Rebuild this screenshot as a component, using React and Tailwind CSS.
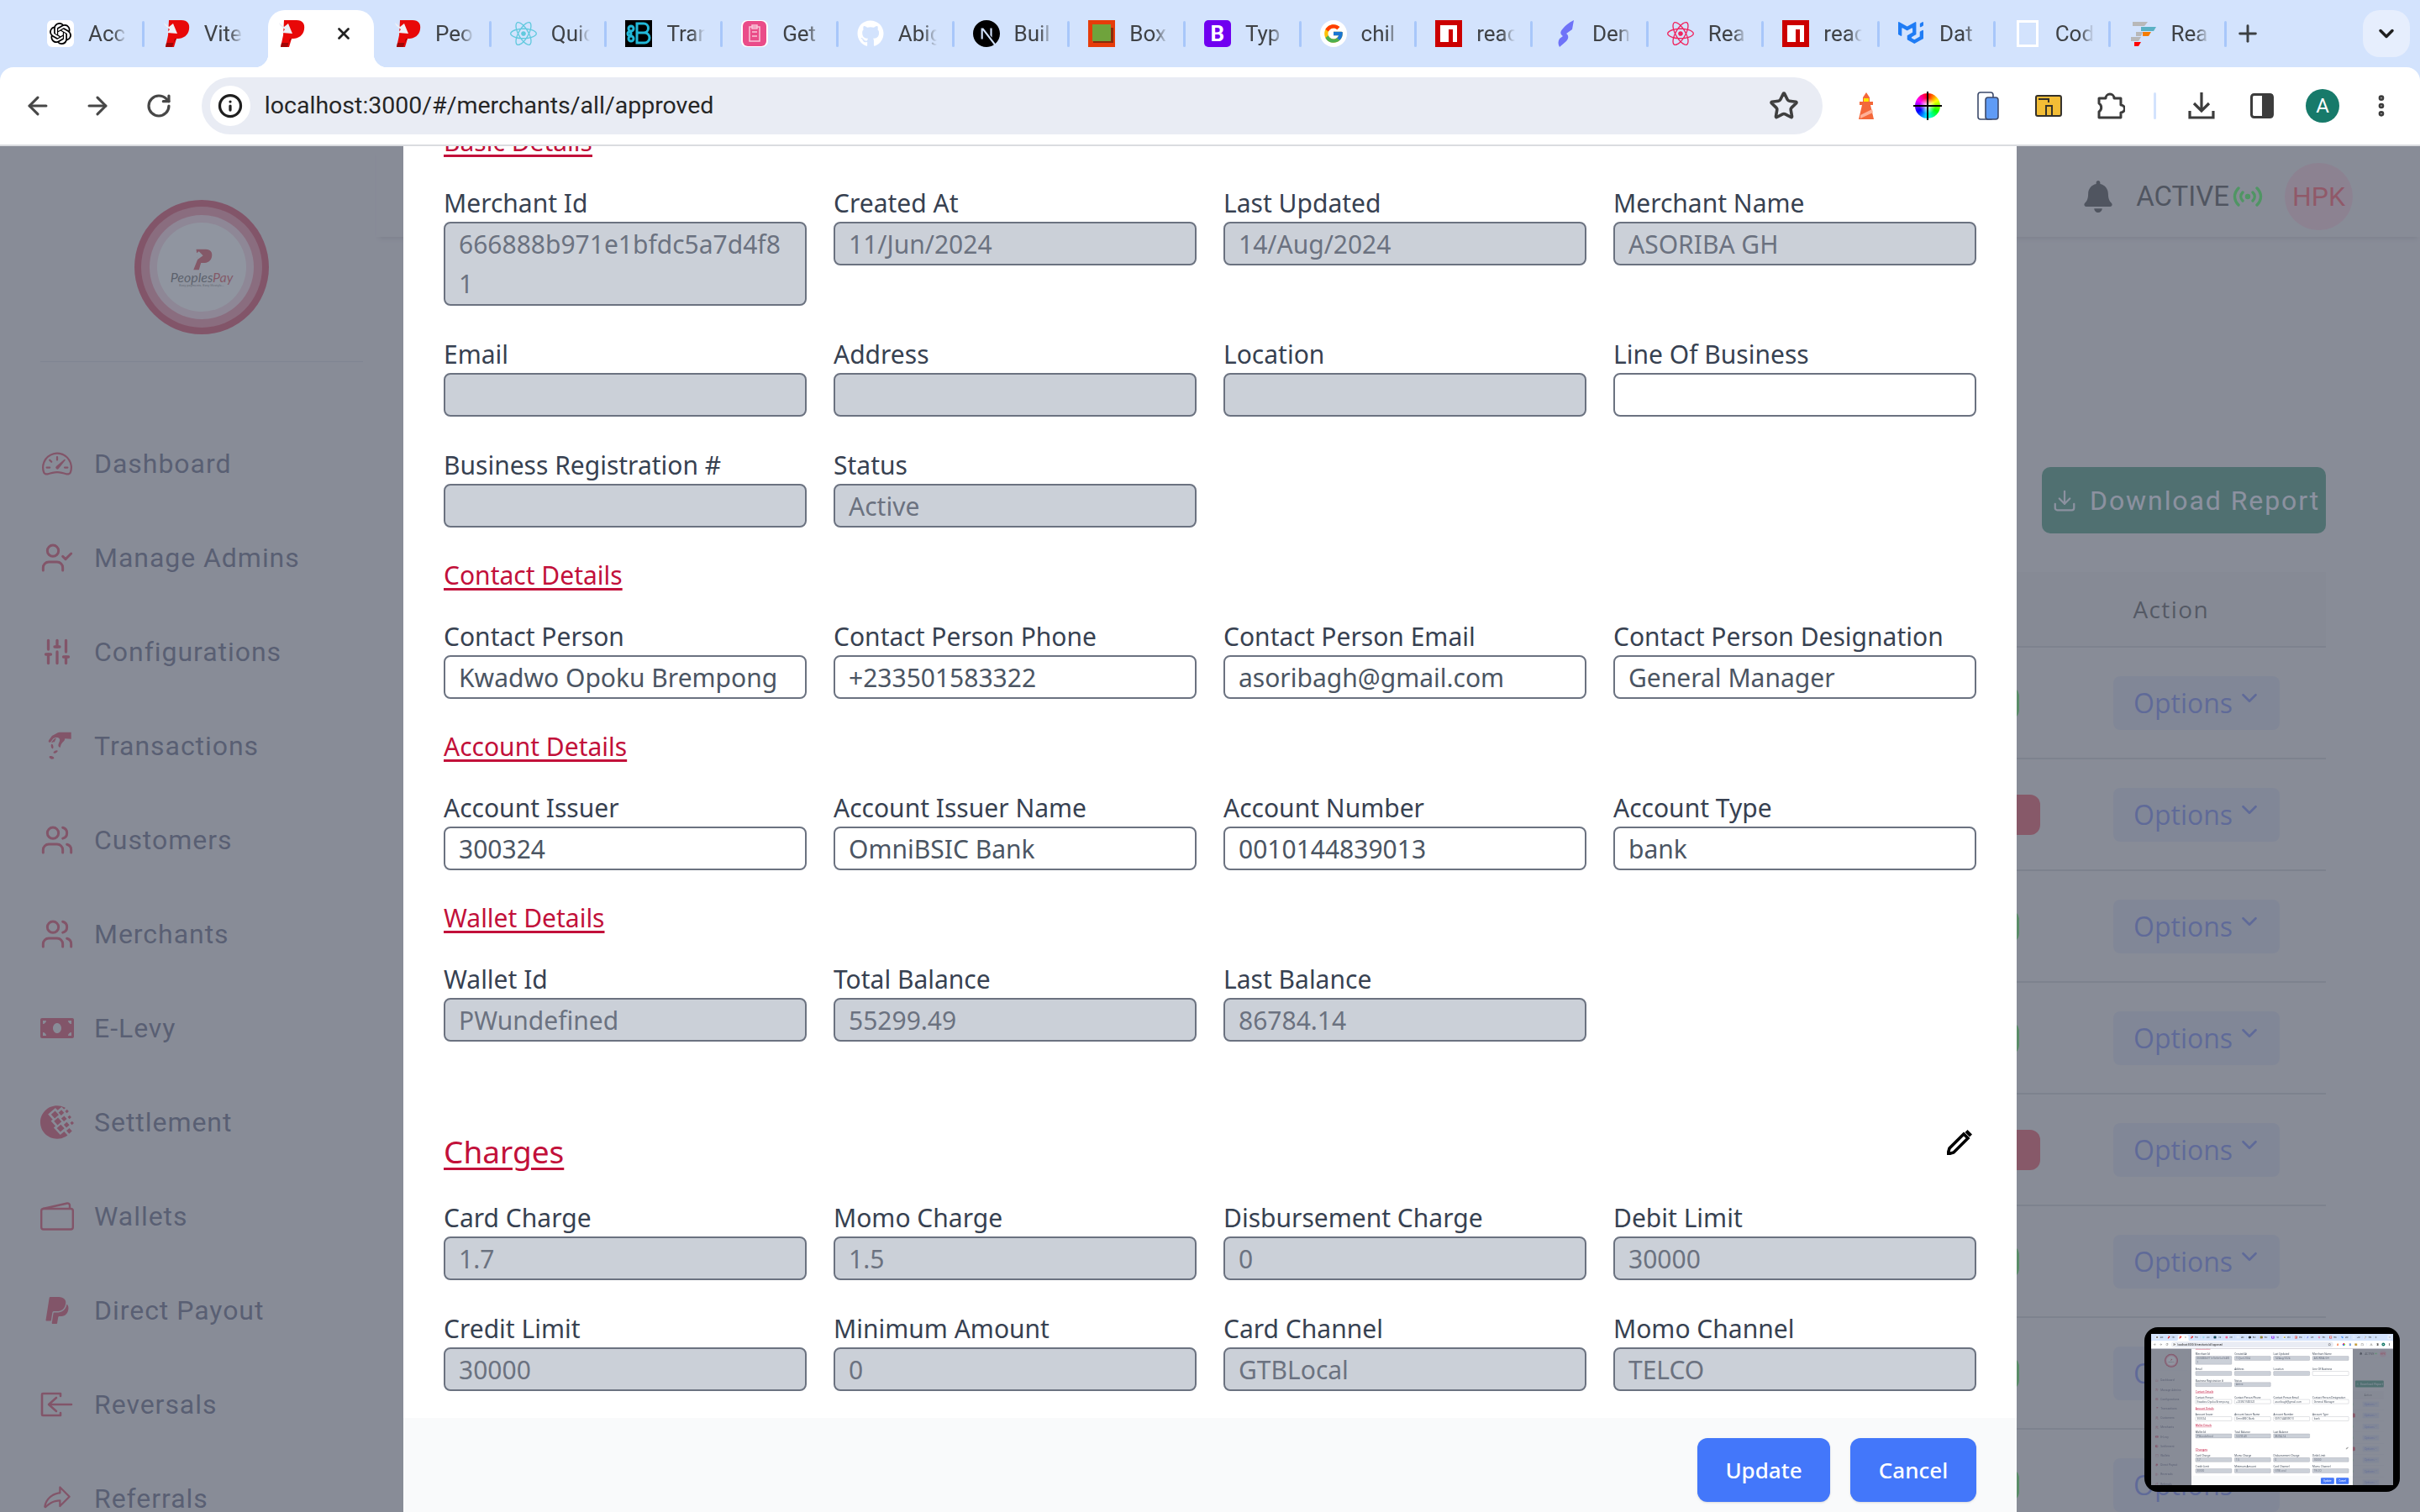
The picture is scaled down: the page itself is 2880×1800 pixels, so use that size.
import React from "react";
import { ArrowLeft, ArrowRight, RotateCw, Star, MoreVertical, X, Plus, ChevronDown, UserCheck, SlidersVertical, Users, Download, Info } from "lucide-react";
import { FaReact, FaGithub, FaPaypal, FaMoneyBill, FaBell } from "react-icons/fa";
import { FcGoogle } from "react-icons/fc";
import { SiOpenai, SiMui, SiWebmoney, SiNextdotjs } from "react-icons/si";
import { GiPayMoney } from "react-icons/gi";
import { PiShareFat } from "react-icons/pi";
import { BsSpeedometer2 } from "react-icons/bs";

const PLogo = () => (
  <svg viewBox="0 0 32 32" className="w-[32px] h-[32px]">
    <path d="M7 0h15c7 0 10 4 9 11-1 7-7 11-13 11h-2l-3 10H3l3-14z" fill="#e80808" />
    <path d="M16 22h-2l-3 10H3l1-5h8z" fill="#a00606" />
    <path d="M1 3l6 5 5-4 5 12-12-1 3-4-6-5z" fill="#eef0f6" />
  </svg>
);
const Npm = () => (
  <svg viewBox="0 0 32 32" className="w-[32px] h-[32px]">
    <rect width="32" height="32" fill="#c00" />
    <path d="M6 6h20v20h-5V11h-5v15H6z" fill="#fff" />
  </svg>
);
const Chain = () => (
  <svg viewBox="0 0 32 32" className="w-[32px] h-[32px]">
    <rect width="32" height="32" fill="#000" />
    <g fill="none" stroke="#22b8d8" strokeWidth="3">
      <path d="M14 4h8a4 4 0 0 1 0 11h-8zM14 15h9a5 5 0 0 1 0 12h-9z" />
      <circle cx="7" cy="10" r="3" /><circle cx="7" cy="22" r="3" />
      <circle cx="5" cy="16" r="2" />
    </g>
  </svg>
);
const Pink = () => (
  <svg viewBox="0 0 32 32" className="w-[32px] h-[32px]">
    <rect width="32" height="32" rx="7" fill="#fff" />
    <rect x="2" y="1" width="28" height="30" rx="6" fill="#ea4c89" />
    <path d="M10 8h12v17H10zM13 6h6v4h-6zM13 14h6M13 19h6" fill="none" stroke="#f9c5d8" strokeWidth="1.5" />
  </svg>
);
const BoxIcon = () => (
  <svg viewBox="0 0 32 32" className="w-[32px] h-[32px]">
    <rect width="32" height="32" fill="#e63c0a" />
    <rect x="6" y="9" width="24" height="18" fill="#8a2b0a" />
    <rect x="5" y="5" width="22" height="20" fill="#6fa33c" />
  </svg>
);
const Den = () => (
  <svg viewBox="0 0 32 32" className="w-[32px] h-[32px]">
    <path d="M14 10c3-4 7-7 13-10l-2 11-7 5c3 2 3 6 0 9-2 2-5 4-8 7-2-3-2-7 0-10l4-3c-4-3-3-6 0-9z" fill="#6f73f8" />
  </svg>
);
const Bars = () => (
  <svg viewBox="0 0 32 32" className="w-[32px] h-[32px]">
    <path d="M4 2h18l-4 5H4z" fill="#b8b8b8" />
    <path d="M14 8h18l-3 5H14z" fill="#5ab1c4" />
    <path d="M8 14h8l-2 5H8z" fill="#b8b8b8" />
    <path d="M16 14h10l-3 5H16z" fill="#f57c00" />
    <path d="M2 20h12l-3 5H2z" fill="#b8b8b8" />
    <path d="M6 26h8l-3 5H6z" fill="#f00" />
  </svg>
);
const Reversal = () => (
  <svg viewBox="0 0 40 32" fill="none" stroke="currentColor" strokeWidth="2.6" strokeLinecap="round" strokeLinejoin="round" className="w-[40px] h-[32px]">
    <path d="M24 6V3H3a1 1 0 0 0-1 1v24a1 1 0 0 0 1 1h21v-3" />
    <path d="M37 16H11M19 8l-9 8 9 8" />
  </svg>
);
const WalletIcon = () => (
  <svg viewBox="0 0 40 34" fill="none" stroke="currentColor" strokeWidth="2.4" strokeLinejoin="round" className="w-[40px] h-[34px]">
    <rect x="1.2" y="8" width="37.6" height="24.5" rx="2.5" />
    <path d="M3 8L32 1.5c1.5-.3 3 .8 3 2.5v4" />
  </svg>
);

const tabs = [
  ["Acc", <div className="w-[32px] h-[32px] rounded-[6px] bg-white flex items-center justify-center"><SiOpenai className="w-[26px] h-[26px] text-black" /></div>],
  ["Vite", <PLogo />],
  ["", <PLogo />],
  ["Peo", <PLogo />],
  ["Quic", <FaReact className="w-[32px] h-[32px] text-[#61c9de]" />],
  ["Tran", <Chain />],
  ["Get", <Pink />],
  ["Abig", <FaGithub className="w-[32px] h-[32px] text-white" />],
  ["Buil", <SiNextdotjs className="w-[32px] h-[32px] text-black" />],
  ["Box", <BoxIcon />],
  ["Typ", <div className="w-[32px] h-[32px] rounded-[5px] bg-[#7000f0] flex items-center justify-center text-white text-[26px] leading-none font-['Roboto',sans-serif] font-bold">B</div>],
  ["chil", <div className="w-[32px] h-[32px] rounded-full bg-white flex items-center justify-center"><FcGoogle className="w-[26px] h-[26px]" /></div>],
  ["reac", <Npm />],
  ["Den", <Den />],
  ["Rea", <FaReact className="w-[32px] h-[32px] text-[#f0245e]" />],
  ["reac", <Npm />],
  ["Dat", <SiMui className="w-[30px] h-[30px] text-[#1f7cf5]" />],
  ["Cod", <div className="w-[26px] h-[32px] ml-[3px] border-[3px] border-white" />],
  ["Rea", <Bars />],
];

function TabStrip() {
  return (
    <div className="h-[80px] bg-[#d3e3fd] flex pl-[34px] relative">
      {tabs.map(([label, icon], i) => {
        const active = i === 2;
        return (
          <div key={i} className="relative w-[137.7px] shrink-0 flex items-start pt-[24px] pl-[22px]">
            {active && (
              <>
                <div className="absolute left-[10px] right-[2px] top-[12px] bottom-0 bg-white rounded-t-[20px]" />
                <div className="absolute left-[-6px] bottom-0 w-[16px] h-[16px] bg-[radial-gradient(circle_at_0_0,transparent_16px,white_16.5px)]" />
                <div className="absolute right-[-14px] bottom-0 w-[16px] h-[16px] bg-[radial-gradient(circle_at_100%_0,transparent_16px,white_16.5px)]" />
              </>
            )}
            <div className="relative w-[32px] h-[32px] shrink-0">{icon}</div>
            {active ? (
              <X className="relative ml-[35px] mt-[5px] w-[22px] h-[22px] text-[#222]" strokeWidth={3} />
            ) : (
              <div className="relative ml-[17px] w-[46px] overflow-hidden whitespace-nowrap text-[26px] leading-[32px] text-[#3f4246] font-['Roboto',sans-serif] [mask-image:linear-gradient(to_right,black_65%,transparent)]">{label}</div>
            )}
            {i !== 1 && i !== 2 && (
              <div className="absolute right-0 top-[25px] w-[3px] h-[31px] rounded-full bg-[#a8c7fa]" />
            )}
          </div>
        );
      })}
      <Plus className="ml-[9px] mt-[24px] w-[32px] h-[32px] text-[#3c4043]" strokeWidth={2.2} />
      <div className="absolute left-[2812px] top-[12px] w-[56px] h-[56px] rounded-[20px] bg-[#e6eefd] flex items-center justify-center">
        <ChevronDown className="w-[28px] h-[28px] text-[#1f1f1f]" strokeWidth={3} />
      </div>
    </div>
  );
}

function ToolBar() {
  return (
    <div className="h-[92px] bg-white rounded-t-[16px] flex items-center border-b-0 pl-[28px] pr-[30px]">
      <ArrowLeft className="w-[34px] h-[34px] text-[#474747]" strokeWidth={2.2} />
      <ArrowRight className="ml-[37px] w-[34px] h-[34px] text-[#474747]" strokeWidth={2.2} />
      <RotateCw className="ml-[40px] w-[32px] h-[32px] text-[#474747]" strokeWidth={2.4} />
      <div className="ml-[35px] w-[1932px] h-[68px] rounded-full bg-[#e9ecf4] flex items-center pl-[10px]">
        <div className="w-[48px] h-[48px] rounded-full bg-white flex items-center justify-center">
          <Info className="w-[30px] h-[30px] text-[#1f1f1f]" strokeWidth={2.6} />
        </div>
        <div className="ml-[17px] text-[28.5px] leading-[40px] text-[#262626] font-['Roboto',sans-serif]">localhost:3000/#/merchants/all/approved</div>
        <Star className="ml-auto mr-[28px] w-[36px] h-[36px] text-[#3f3f3f]" strokeWidth={2.4} />
      </div>
      <div className="ml-[40px] w-[24px] h-[32px] flex">
        <svg viewBox="0 0 24 32" className="w-[24px] h-[32px]">
          <path d="M12 0l4 6v5h4v4h-3l4 17H3l4-17H4v-4h4V6z" fill="#f4683a" />
          <rect x="9" y="7" width="6" height="4" fill="#ffe600" />
          <path d="M5 27l14-7 1 4-15 7z" fill="#ffb097" />
        </svg>
      </div>
      <div className="ml-[46px] w-[30px] h-[30px] rounded-full bg-[radial-gradient(circle,#ffffff_0%,transparent_45%),conic-gradient(#ff0000,#ffff00,#00ff00,#00ffff,#0000ff,#ff00ff,#ff0000)] relative">
        <div className="absolute left-[14px] top-[-2px] w-[2px] h-[34px] bg-black" />
        <div className="absolute top-[14px] left-[-2px] h-[2px] w-[34px] bg-black" />
      </div>
      <svg viewBox="0 0 26 34" className="ml-[44px] w-[26px] h-[34px]">
        <rect x="1" y="1" width="18" height="32" rx="3" fill="#fff" stroke="#3c4a6b" strokeWidth="1.6" />
        <rect x="10" y="7" width="15" height="26" rx="3" fill="#5f9bf5" stroke="#3c4a6b" strokeWidth="1.6" />
      </svg>
      <svg viewBox="0 0 32 26" className="ml-[43px] w-[32px] h-[26px]">
        <rect x="1" y="1" width="30" height="24" rx="2" fill="#f3bd36" stroke="#33302a" strokeWidth="2" />
        <path d="M4 5h12v4M13 25V13h7v12" fill="none" stroke="#33302a" strokeWidth="2" />
      </svg>
      <svg viewBox="0 0 34 34" className="ml-[41px] w-[34px] h-[34px]" fill="none" stroke="#3c3c3c" strokeWidth="3" strokeLinejoin="round">
        <path d="M3 8h8a5 5 0 0 1 10 0h8v8a4 4 0 0 1 0 9v6H3v-7a6 6 0 0 0 0-10z" />
      </svg>
      <div className="ml-[34px] w-[3px] h-[32px] rounded-full bg-[#d3e3fd]" />
      <svg viewBox="0 0 32 32" className="ml-[38px] w-[32px] h-[32px]" fill="none" stroke="#3c3c3c" strokeWidth="3.2">
        <path d="M16 0v21M7 13l9 9 9-9M2 22v8h28v-8" />
      </svg>
      <svg viewBox="0 0 28 30" className="ml-[42px] w-[28px] h-[30px]">
        <rect x="1.5" y="1.5" width="25" height="27" rx="3" fill="#fff" stroke="#3c3c3c" strokeWidth="3" />
        <rect x="14" y="1.5" width="13" height="27" fill="#3c3c3c" />
      </svg>
      <div className="ml-[38px] w-[40px] h-[40px] rounded-full bg-[#177a6a] text-white text-[24px] flex items-center justify-center font-['Roboto',sans-serif]">A</div>
      <MoreVertical className="ml-[34px] w-[32px] h-[32px] text-[#3c3c3c]" strokeWidth={3} />
    </div>
  );
}

const Nav = [
  ["Dashboard", <BsSpeedometer2 className="w-[36px] h-[36px]" />],
  ["Manage Admins", <UserCheck className="w-[40px] h-[40px]" strokeWidth={1.8} />],
  ["Configurations", <SlidersVertical className="w-[36px] h-[36px]" strokeWidth={2.2} />],
  ["Transactions", <GiPayMoney className="w-[36px] h-[36px]" />],
  ["Customers", <Users className="w-[40px] h-[40px]" strokeWidth={1.8} />],
  ["Merchants", <Users className="w-[40px] h-[40px]" strokeWidth={1.8} />],
  ["E-Levy", <FaMoneyBill className="w-[40px] h-[40px]" />],
  ["Settlement", <SiWebmoney className="w-[40px] h-[40px]" />],
  ["Wallets", <WalletIcon />],
  ["Direct Payout", <FaPaypal className="w-[36px] h-[36px]" />],
  ["Reversals", <Reversal />],
  ["Referrals", <PiShareFat className="w-[36px] h-[36px]" />],
];

function Sidebar() {
  return (
    <div className="w-[448px] shrink-0 flex flex-col items-stretch">
      <div className="mt-[64px] ml-[160px] w-[160px] h-[160px] shrink-0 rounded-full bg-[#c80024] p-[8px]">
        <div className="w-full h-full rounded-full bg-[#e8607c] p-[10px]">
          <div className="w-full h-full rounded-full bg-[#f6c8d6] p-[9px]">
            <div className="w-full h-full rounded-full bg-white flex flex-col items-center justify-center pt-[2px]">
              <svg viewBox="0 0 32 32" className="w-[26px] h-[26px]">
                <path d="M8 1h14c7 0 10 5 9 10-1 7-6 10-13 10h-3l-3 10H4l6-15z" fill="#d01020" />
                <path d="M1 5l7 2 4-3 6 6-8 6-1-4-5 1z" fill="#fff" />
              </svg>
              <div className="text-[16px] leading-[15px] italic text-[#333] font-['Lato',sans-serif]">Peoples<span className="text-[#d01020]">Pay</span></div>
              <div className="text-[4px] leading-[6px] text-[#444] font-['Lato',sans-serif]">Easy payments, Easy lifestyle...</div>
            </div>
          </div>
        </div>
      </div>
      <div className="mt-[32px] ml-[48px] w-[384px] h-[1px] shrink-0 bg-[#bfbfc6]" />
      <div className="mt-[65px] flex flex-col shrink-0">
        {Nav.map(([label, icon]) => (
          <div key={label} className="h-[112px] shrink-0 pl-[48px] flex items-center">
            <div className="w-[40px] h-[44px] flex items-center justify-center text-[#c80024]">{icon}</div>
            <div className="ml-[24px] text-[32px] leading-[44px] tracking-[0.03em] text-[#272a4c] font-['Roboto',sans-serif] whitespace-nowrap">{label}</div>
          </div>
        ))}
      </div>
    </div>
  );
}

const statuses = ["g", "r", "g", "g", "r", "g", "g", "g"];

function Main() {
  return (
    <div className="flex-1 flex flex-col min-w-0">
      <div className="h-[108px] shrink-0 pt-[12px] shadow-[0_5px_6px_-3px_rgba(0,0,0,0.2)] flex items-center justify-end pr-[80px]">
        <FaBell className="w-[34px] h-[38px] text-black" />
        <div className="ml-[28px] text-[33px] text-black font-['Roboto',sans-serif]">ACTIVE</div>
        <svg viewBox="0 0 36 24" className="ml-[4px] w-[36px] h-[24px]" fill="none" stroke="#00ff10" strokeWidth="3.4" strokeLinecap="round">
          <path d="M7 2c-6 6-6 14 0 20M12 7c-3 3-3 7 0 10M29 2c6 6 6 14 0 20M24 7c3 3 3 7 0 10" />
          <circle cx="18" cy="12" r="1.5" fill="#00ff10" />
        </svg>
        <div className="ml-[26px] w-[81px] h-[80px] rounded-full bg-[#efb2c4] flex items-center justify-center text-[32px] text-[#ff1224] font-['Roboto',sans-serif]">HPK</div>
      </div>
      <div className="mt-[274px] shrink-0 self-end mr-[112px] w-[338px] h-[79px] rounded-[10px] bg-[#006e44] flex items-center pl-[12px] text-[#f0f0ff]">
        <Download className="w-[30px] h-[30px]" strokeWidth={1.8} />
        <span className="ml-[15px] text-[32px] tracking-[0.06em] whitespace-nowrap font-['Roboto',sans-serif]">Download Report</span>
      </div>
      <div className="mt-[46px] ml-[40px] mr-[112px] shrink-0">
        <div className="h-[90px] bg-[#d7d2d4] border-b-[2px] border-[#b3b2b8] flex items-center justify-end pr-[139px]">
          <span className="text-[28px] tracking-[0.05em] text-[#111] font-medium font-['Open_Sans',sans-serif]">Action</span>
        </div>
        {statuses.map((s, i) => (
          <div key={i} className="h-[133px] border-b-[2px] border-[#b3b2b8] flex items-center justify-end pr-[55px]">
            <div className={s === "g" ? "mr-[112px] w-[100px] h-[40px] rounded-[12px] bg-[#28da24]" : "mr-[87px] w-[120px] h-[48px] rounded-[12px] bg-[#db1224]"} />
            <div className="w-[198px] h-[64px] rounded-[8px] bg-[#c4c8da] flex items-center pl-[24px] text-[#3f55e0]">
              <span className="text-[32px] font-['Open_Sans',sans-serif]">Options</span>
              <ChevronDown className="ml-[5px] -mt-[12px] w-[30px] h-[30px]" strokeWidth={2.2} />
            </div>
          </div>
        ))}
      </div>
    </div>
  );
}

function Field({ label, value = "", edit = false, wrapped = false }) {
  return (
    <div className="flex flex-col min-w-0">
      <div className="pt-[3px] text-[30px] leading-[45px] text-[#374151] whitespace-nowrap">{label}</div>
      <div className={"min-h-[52px] border-[2px] border-[#6b7280] rounded-[8px] px-[16px] pt-[1px] text-[30px] leading-[47px] break-all " + (wrapped ? "pb-[1px] " : "") + (edit ? "bg-white text-[#4b5563]" : "bg-[#cbd0d8] text-[#6b7280]")}>{value}</div>
    </div>
  );
}

function Section({ title, children }) {
  return (
    <div className="flex flex-col">
      <div className="pt-[2px] text-[30px] leading-[46px] text-[#c2103a] underline underline-offset-[4px] mb-[24px]">{title}</div>
      <div className="grid grid-cols-4 gap-x-[32px] gap-y-[32px]">{children}</div>
    </div>
  );
}

function Modal() {
  return (
    <div className="absolute left-[480px] top-0 bottom-0 w-[1920px] bg-white flex flex-col font-['Noto_Sans',sans-serif]">
      <div className="flex-1 min-h-0 overflow-hidden">
        <div className="-mt-[30px] px-[48px] flex flex-col gap-[32px]">
          <Section title="Basic Details">
            <Field label="Merchant Id" value="666888b971e1bfdc5a7d4f81" wrapped />
            <Field label="Created At" value="11/Jun/2024" />
            <Field label="Last Updated" value="14/Aug/2024" />
            <Field label="Merchant Name" value="ASORIBA GH" />
            <Field label="Email" />
            <Field label="Address" />
            <Field label="Location" />
            <Field label="Line Of Business" edit />
            <Field label="Business Registration #" />
            <Field label="Status" value="Active" />
          </Section>
          <Section title="Contact Details">
            <Field label="Contact Person" value="Kwadwo Opoku Brempong" edit />
            <Field label="Contact Person Phone" value="+233501583322" edit />
            <Field label="Contact Person Email" value="asoribagh@gmail.com" edit />
            <Field label="Contact Person Designation" value="General Manager" edit />
          </Section>
          <Section title="Account Details">
            <Field label="Account Issuer" value="300324" edit />
            <Field label="Account Issuer Name" value="OmniBSIC Bank" edit />
            <Field label="Account Number" value="0010144839013" edit />
            <Field label="Account Type" value="bank" edit />
          </Section>
          <Section title="Wallet Details">
            <Field label="Wallet Id" value="PWundefined" />
            <Field label="Total Balance" value="55299.49" />
            <Field label="Last Balance" value="86784.14" />
          </Section>
          <div className="mt-[72px] flex flex-col">
            <div className="flex items-start justify-between mb-[24px]">
              <div className="text-[37px] leading-[54px] pb-[2px] text-[#c2103a] underline underline-offset-[5px]">Charges</div>
              <svg viewBox="0 0 30 30" className="w-[30px] h-[30px] mr-[5px] mt-[1px]">
                <path d="M20 5L3 22l-2 7 7-2L25 10z" fill="none" stroke="#000" strokeWidth="3.6" />
                <path d="M21.5 3l3-3 5.5 5.5-3 3z" fill="#000" />
              </svg>
            </div>
            <div className="grid grid-cols-4 gap-x-[32px] gap-y-[32px]">
              <Field label="Card Charge" value="1.7" />
              <Field label="Momo Charge" value="1.5" />
              <Field label="Disbursement Charge" value="0" />
              <Field label="Debit Limit" value="30000" />
              <Field label="Credit Limit" value="30000" />
              <Field label="Minimum Amount" value="0" />
              <Field label="Card Channel" value="GTBLocal" />
              <Field label="Momo Channel" value="TELCO" />
            </div>
          </div>
        </div>
      </div>
      <div className="h-[112px] shrink-0 bg-[#f9fafb] flex items-start justify-end pt-[24px] pr-[48px] gap-[24px]">
        <div className="w-[158px] h-[76px] rounded-[12px] bg-[#4377fa] shadow-sm text-white text-[26px] font-medium flex items-center justify-center">Update</div>
        <div className="w-[150px] h-[76px] rounded-[12px] bg-[#4377fa] shadow-sm text-white text-[26px] font-medium flex items-center justify-center">Cancel</div>
      </div>
    </div>
  );
}

function Screen({ thumb = false }) {
  return (
    <div className="w-[2880px] h-[1800px] overflow-hidden flex flex-col bg-[#d3e3fd] relative">
      <TabStrip />
      <ToolBar />
      <div className="h-[2px] bg-[#dadce0] shrink-0" />
      <div className="flex-1 min-h-0 relative bg-[#dfdadc] overflow-hidden">
        <div className="flex h-full">
          <Sidebar />
          <Main />
        </div>
        <div className="absolute inset-0 bg-[#6b7280]/75" />
        <Modal />
        {!thumb && (
          <div className="absolute right-[24px] bottom-[24px] w-[304px] h-[196px] rounded-[16px] bg-black p-[8px]">
            <div className="relative w-[288px] h-[180px] overflow-hidden">
              <div className="absolute left-0 top-0 origin-top-left scale-[0.1]">
                <Screen thumb />
              </div>
            </div>
          </div>
        )}
      </div>
    </div>
  );
}

export default function App() {
  return <Screen />;
}
